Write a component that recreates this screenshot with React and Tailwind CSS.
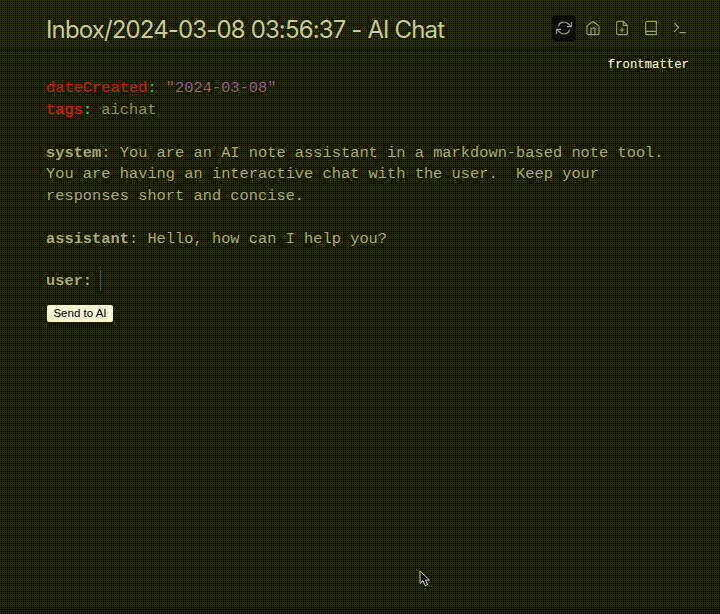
const icon = {
  width: 16,
  height: 16,
  viewBox: "0 0 24 24",
  fill: "none",
  stroke: "currentColor",
  strokeWidth: 1.7,
  strokeLinecap: "round",
  strokeLinejoin: "round",
};

function Refresh() {
  return (
    <svg {...icon}>
      <polyline points="23 4 23 10 17 10" />
      <polyline points="1 20 1 14 7 14" />
      <path d="M3.51 9a9 9 0 0 1 14.85-3.36L23 10M1 14l4.64 4.36A9 9 0 0 0 20.49 15" />
    </svg>
  );
}

function Home() {
  return (
    <svg {...icon}>
      <path d="M3 9l9-7 9 7v11a2 2 0 0 1-2 2H5a2 2 0 0 1-2-2z" />
      <polyline points="9 22 9 12 15 12 15 22" />
    </svg>
  );
}

function FilePlus() {
  return (
    <svg {...icon}>
      <path d="M14 2H6a2 2 0 0 0-2 2v16a2 2 0 0 0 2 2h12a2 2 0 0 0 2-2V8z" />
      <polyline points="14 2 14 8 20 8" />
      <path d="M12 18v-6M9 15h6" />
    </svg>
  );
}

function Book() {
  return (
    <svg {...icon}>
      <path d="M4 19.5V4.500A2.500 2.500 0 0 1 6.500 2H20v20H6.500a2.500 2.500 0 0 1 0-5H20" />
    </svg>
  );
}

function Terminal() {
  return (
    <svg {...icon}>
      <polyline points="4 17 10 11 4 5" />
      <path d="M12 19h8" />
    </svg>
  );
}

function Line({ children }) {
  return <div className="h-[21.5px] whitespace-pre">{children}</div>;
}

export default function App() {
  return (
    <div className="relative flex h-[614px] w-[720px] flex-col overflow-hidden bg-[conic-gradient(#1e1e00_25%,#000012_0_50%,#1e1e00_0_75%,#242404_0)] bg-[length:2px_2px] text-[#a6a692]">
      <header className="flex h-[51px] shrink-0 items-center justify-between border-b border-[#101006] bg-[#242400] bg-[conic-gradient(#242400_25%,#000044_0_50%,#242400_0_75%,#242404_0)] bg-[length:2px_2px] pl-[46px] pr-[28px] pt-[5px]">
        <h1 className="pt-[4px] font-['Inter',sans-serif] text-[24px] tracking-[-0.86px] text-[#c6c6b2] whitespace-nowrap">
          Inbox/2024-03-08 03:56:37 - AI Chat
        </h1>
        <nav className="flex gap-[5px] text-[#9b9b84]">
          <button className="flex h-[26px] w-6 items-center justify-center rounded-sm bg-[#0a0a04]"><Refresh /></button>
          <button className="flex h-[26px] w-6 items-center justify-center"><Home /></button>
          <button className="flex h-[26px] w-6 items-center justify-center"><FilePlus /></button>
          <button className="flex h-[26px] w-6 items-center justify-center"><Book /></button>
          <button className="flex h-[26px] w-6 items-center justify-center"><Terminal /></button>
        </nav>
      </header>
      <main className="pl-[46px] pr-[25px] font-['Liberation_Mono',monospace] text-[15.36px] leading-[21.5px]">
        <div className="h-[27px] pr-[6px] pt-[4px] text-right text-[12.3px] text-[#f8f8dc] [-webkit-text-stroke:0.1px_#f8f8dc]">frontmatter</div>
        <Line>
          <span className="text-[#c71c08] [-webkit-text-stroke:0.2px_#c71c08]">dateCreated</span>
          <span className="text-[#45aaa0]">:</span> <span className="text-[#8f5d9e]">"2024-03-08"</span>
        </Line>
        <Line>
          <span className="text-[#c71c08] [-webkit-text-stroke:0.5px_#c71c08]">tags</span>
          <span className="font-bold text-[#45aaa0]">:</span> <span className="text-[#8d8d78]">aichat</span>
        </Line>
        <Line />
        <Line><b>system</b>: You are an AI note assistant in a markdown-based note tool.</Line>
        <Line>You are having an interactive chat with the user.  Keep your</Line>
        <Line>responses short and concise.</Line>
        <Line />
        <Line><b>assistant</b>: Hello, how can I help you?</Line>
        <Line />
        <div className="-mt-px flex h-[21.5px] items-center whitespace-pre">
          <b>user:</b>
          <span className="ml-[8px] h-5 w-px bg-[#2c58b4]" />
        </div>
        <div className="mt-[9px] h-[41px] rounded-sm border-x border-[#2a2a1c] pt-[4px]">
          <button className="block h-[17px] w-[66px] rounded-[2px] bg-[#f6f6d6] font-['Liberation_Sans',sans-serif] text-[11.5px] leading-[17px] text-black">
            Send to AI
          </button>
        </div>
      </main>
      <svg className="absolute left-[419px] top-[570px]" width="12" height="18" viewBox="0 0 12 18">
        <path d="M1 1v12.500l3-2.700 2 4.700 2.500-1-2-4.500h4z" fill="#080804" stroke="#d5d5bc" strokeWidth="1" />
      </svg>
    </div>
  );
}
